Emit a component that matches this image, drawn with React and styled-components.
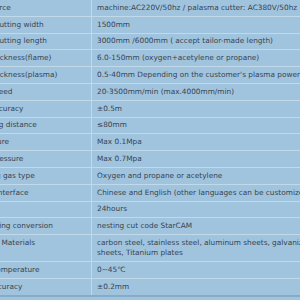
import React from "react";
import styled, { createGlobalStyle } from "styled-components";

const specs = [
  ["Power Source", "machine:AC220V/50hz / palasma cutter: AC380V/50hz"],
  ["Effective cutting width", "1500mm"],
  ["Effective cutting length", "3000mm /6000mm ( accept tailor-made length)"],
  ["Cutting thickness(flame)", "6.0-150mm (oxygen+acetylene or propane)"],
  ["Cutting thickness(plasma)", "0.5-40mm Depending on the customer's plasma power"],
  ["Cutting speed", "20-3500mm/min (max.4000mm/min)"],
  ["Cutting accuracy", "±0.5m"],
  ["Torch lifting distance", "≤80mm"],
  ["Gas pressure", "Max 0.1Mpa"],
  ["Oxygen pressure", "Max 0.7Mpa"],
  ["Preheating gas type", "Oxygen and propane or acetylene"],
  ["Software interface", "Chinese and English (other languages can be customized)"],
  ["Work time", "24hours"],
  ["Programming conversion", "nesting cut code StarCAM"],
  ["Applicable Materials", "carbon steel, stainless steel, aluminum sheets, galvanized sheets, Titanium plates"],
  ["Working temperature", "0~45℃"],
  ["Repeat accuracy", "±0.2mm"],
];

const GlobalStyle = createGlobalStyle`
  html, body {
    margin: 0;
    padding: 0;
    background: #a1c4de;
  }
`;

const Viewport = styled.div`
  width: 300px;
  height: 300px;
  overflow: hidden;
  background: #a1c4de;
`;

const Table = styled.table`
  margin-left: -44px;
  border-collapse: collapse;
  table-layout: fixed;
  width: 371px;
  font-family: "DejaVu Sans", Verdana, sans-serif;
  font-size: 7.35px;
  line-height: 10.2px;
  color: #36434f;
  border-bottom: 2px solid #86abc8;
`;

const Row = styled.tr`
  border-bottom: 1px solid #c2d9ea;
`;

const Label = styled.td`
  width: 126px;
  padding: 2.8px 4px 2.8px 5px;
  vertical-align: top;
  white-space: nowrap;
  overflow: hidden;
  border-right: 1px solid #c2d9ea;
`;

const Value = styled.td`
  width: 225px;
  padding: 2.8px 6px 2.8px 5px;
  vertical-align: top;
`;

export default function App() {
  return (
    <Viewport>
      <GlobalStyle />
      <Table>
        <tbody>
          {specs.map(([label, value]) => (
            <Row key={label}>
              <Label>{label}</Label>
              <Value>{value}</Value>
            </Row>
          ))}
        </tbody>
      </Table>
    </Viewport>
  );
}
